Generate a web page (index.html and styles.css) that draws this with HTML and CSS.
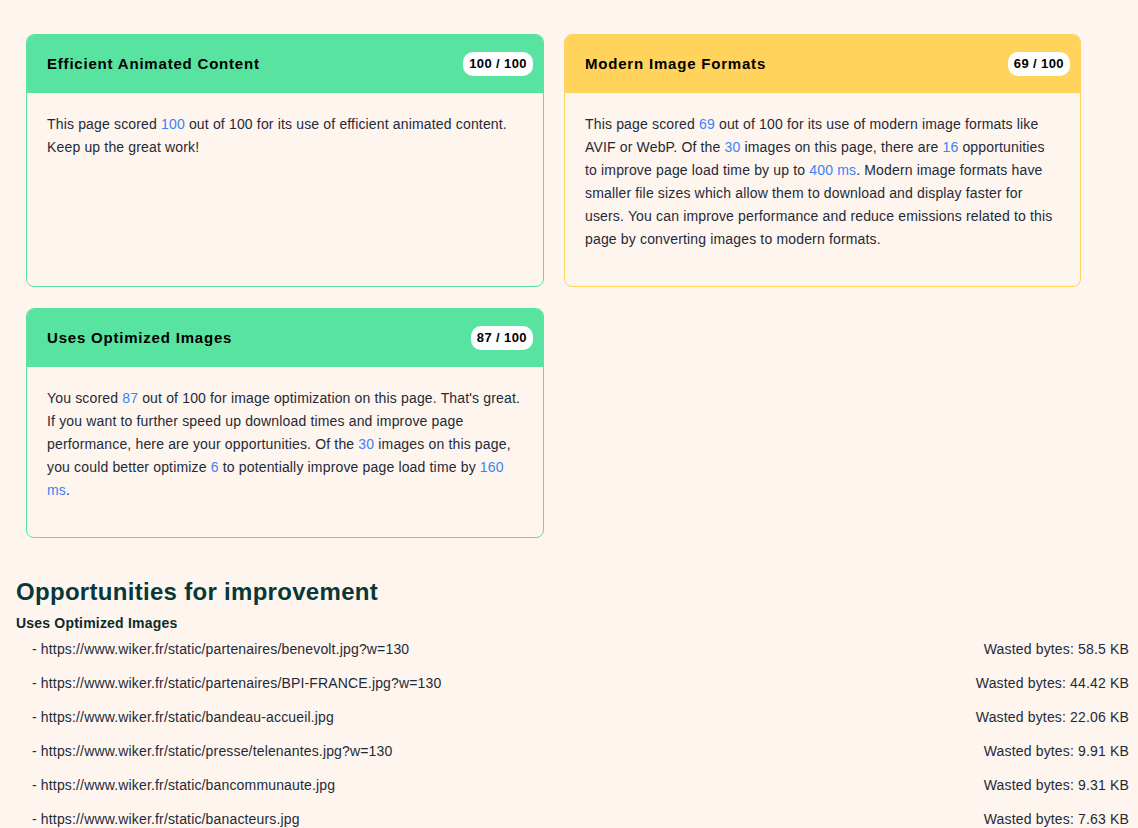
FILE: index.html
```html
<!DOCTYPE html>
<html>
<head>
<meta charset="utf-8">
<link rel="stylesheet" href="styles.css">
</head>
<body>
<div class="cards">
  <div class="card good">
    <div class="card-head">
      <h3 class="card-title">Efficient Animated Content</h3>
      <span class="badge">100 / 100</span>
    </div>
    <div class="card-body">
      <p>This page scored <span class="num">100</span> out of 100 for its use of efficient animated content. Keep up the great work!</p>
    </div>
  </div>
  <div class="card warn">
    <div class="card-head">
      <h3 class="card-title">Modern Image Formats</h3>
      <span class="badge">69 / 100</span>
    </div>
    <div class="card-body">
      <p>This page scored <span class="num">69</span> out of 100 for its use of modern image formats like AVIF or WebP. Of the <span class="num">30</span> images on this page, there are <span class="num">16</span> opportunities to improve page load time by up to <span class="num">400 ms</span>. Modern image formats have smaller file sizes which allow them to download and display faster for users. You can improve performance and reduce emissions related to this page by converting images to modern formats.</p>
    </div>
  </div>
  <div class="card good">
    <div class="card-head">
      <h3 class="card-title">Uses Optimized Images</h3>
      <span class="badge">87 / 100</span>
    </div>
    <div class="card-body">
      <p>You scored <span class="num">87</span> out of 100 for image optimization on this page. That's great. If you want to further speed up download times and improve page performance, here are your opportunities. Of the <span class="num">30</span> images on this page, you could better optimize <span class="num">6</span> to potentially improve page load time by <span class="num">160 ms</span>.</p>
    </div>
  </div>
</div>

<section class="opps">
  <h2 class="opps-title">Opportunities for improvement</h2>
  <h4 class="opps-sub">Uses Optimized Images</h4>
  <ul class="opps-list">
    <li><span>- https://www.wiker.fr/static/partenaires/benevolt.jpg?w=130</span><span>Wasted bytes: 58.5 KB</span></li>
    <li><span>- https://www.wiker.fr/static/partenaires/BPI-FRANCE.jpg?w=130</span><span>Wasted bytes: 44.42 KB</span></li>
    <li><span>- https://www.wiker.fr/static/bandeau-accueil.jpg</span><span>Wasted bytes: 22.06 KB</span></li>
    <li><span>- https://www.wiker.fr/static/presse/telenantes.jpg?w=130</span><span>Wasted bytes: 9.91 KB</span></li>
    <li><span>- https://www.wiker.fr/static/bancommunaute.jpg</span><span>Wasted bytes: 9.31 KB</span></li>
    <li><span>- https://www.wiker.fr/static/banacteurs.jpg</span><span>Wasted bytes: 7.63 KB</span></li>
  </ul>
</section>
</body>
</html>
```

FILE: styles.css
```css
html, body {
  margin: 0;
  padding: 0;
  background: #fef5ef;
  font-family: "Liberation Sans", Arial, sans-serif;
  color: #1f2a37;
}

.cards {
  display: grid;
  grid-template-columns: 518px 517px;
  column-gap: 20px;
  row-gap: 21px;
  padding: 34px 0 0 26px;
}

.card {
  border: 1px solid #58e4a0;
  border-radius: 8px;
  overflow: hidden;
  display: flex;
  flex-direction: column;
}

.card.warn {
  border-color: #ffd35c;
}

.card-head {
  height: 58px;
  display: flex;
  align-items: center;
  justify-content: space-between;
  padding: 0 10px 0 20px;
  background: #58e4a0;
}

.card.warn .card-head {
  background: #ffd35c;
}

.card-title {
  margin: 0 0 1px 0;
  font-size: 15px;
  font-weight: bold;
  letter-spacing: 0.8px;
  color: #000;
}

.badge {
  background: #fff;
  border-radius: 10px;
  padding: 4px 6px;
  font-size: 13px;
  font-weight: bold;
  line-height: 16px;
  color: #000;
  letter-spacing: 0.4px;
}

.card-body {
  padding: 20px 20px 35px 20px;
}

.card-body p {
  margin: 0;
  font-size: 14px;
  line-height: 23px;
  letter-spacing: 0.16px;
  color: #1f2a37;
}

.num {
  color: #3b82f6;
}

.opps {
  padding: 40px 9px 0 16px;
}

.opps-title {
  margin: 0;
  font-size: 24px;
  line-height: 28px;
  font-weight: bold;
  letter-spacing: 0.3px;
  color: #073737;
}

.opps-sub {
  margin: 8px 0 0 0;
  font-size: 14px;
  line-height: 18px;
  font-weight: bold;
  letter-spacing: 0.2px;
  color: #0d2a2a;
}

.opps-list {
  list-style: none;
  margin: 0;
  padding: 0 0 0 16px;
}

.opps-list li {
  display: flex;
  justify-content: space-between;
  font-size: 14px;
  line-height: 18px;
  letter-spacing: 0.16px;
  padding: 8px 0 8px 0;
  color: #1f2a37;
}
```
